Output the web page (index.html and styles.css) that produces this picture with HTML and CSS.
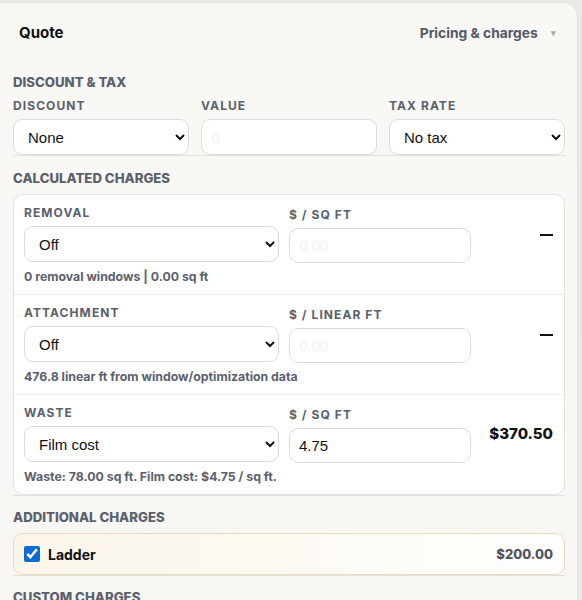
FILE: index.html
```html
<!DOCTYPE html>
<html>
<head>
<meta charset="utf-8">
<link rel="stylesheet" href="styles.css">
</head>
<body>
<div class="card">
  <div class="header">
    <div class="title">Quote</div>
    <div class="tab">Pricing &amp; charges <span class="caret">▾</span></div>
  </div>

  <section class="section sec-first">
    <h3 class="sec-title">Discount &amp; Tax</h3>
    <div class="three">
      <div class="field">
        <label class="lbl">Discount</label>
        <select class="ctl"><option>None</option></select>
      </div>
      <div class="field">
        <label class="lbl">Value</label>
        <input class="ctl" placeholder="0">
      </div>
      <div class="field">
        <label class="lbl">Tax rate</label>
        <select class="ctl"><option>No tax</option></select>
      </div>
    </div>
  </section>

  <section class="section sec-calc">
    <h3 class="sec-title">Calculated charges</h3>
    <div class="calc">
      <div class="row">
        <div class="col1">
          <label class="lbl">Removal</label>
          <select class="ctl"><option>Off</option></select>
          <div class="hint">0 removal windows | 0.00 sq ft</div>
        </div>
        <div class="col2">
          <label class="lbl">$ / sq ft</label>
          <input class="ctl in" placeholder="0.00">
        </div>
        <div class="col3"><span class="dash"></span></div>
      </div>
      <div class="row">
        <div class="col1">
          <label class="lbl">Attachment</label>
          <select class="ctl"><option>Off</option></select>
          <div class="hint">476.8 linear ft from window/optimization data</div>
        </div>
        <div class="col2">
          <label class="lbl">$ / linear ft</label>
          <input class="ctl in" placeholder="0.00">
        </div>
        <div class="col3"><span class="dash"></span></div>
      </div>
      <div class="row">
        <div class="col1">
          <label class="lbl">Waste</label>
          <select class="ctl"><option>Film cost</option></select>
          <div class="hint">Waste: 78.00 sq ft. Film cost: $4.75 / sq ft.</div>
        </div>
        <div class="col2">
          <label class="lbl">$ / sq ft</label>
          <input class="ctl in" value="4.75">
        </div>
        <div class="col3"><span class="amount">$370.50</span></div>
      </div>
    </div>
  </section>

  <section class="section">
    <h3 class="sec-title">Additional charges</h3>
    <div class="extra">
      <label class="chk"><input type="checkbox" checked> <span>Ladder</span></label>
      <span class="extra-amt">$200.00</span>
    </div>
  </section>

  <section class="section">
    <h3 class="sec-title">Custom charges</h3>
  </section>
</div>
</body>
</html>
```

FILE: styles.css
```css
html, body {
  margin: 0;
  padding: 0;
  background: #ebe9e4;
  font-family: Inter, "Liberation Sans", Arial, sans-serif;
  height: 600px;
  overflow: hidden;
}
body {
  padding: 3px 5px 0 0;
}
.card {
  margin-left: -14px;
  background: linear-gradient(180deg, #f9f8f5 0%, #f7f6f2 100%);
  border-radius: 14px;
  padding: 0 12px 40px 27px;
  box-shadow: 0 0 0 1px rgba(0,0,0,0.03);
}
.header {
  display: flex;
  justify-content: space-between;
  align-items: center;
  padding: 17px 0 0 6px;
  height: 26px;
}
.title {
  font-size: 15px;
  font-weight: 700;
  color: #111;
  line-height: 20px;
}
.tab {
  font-size: 13.8px;
  font-weight: 700;
  color: #545b66;
  line-height: 20px;
  padding-right: 9px;
}
.caret {
  font-size: 9px;
  color: #a3a7ad;
  margin-left: 10px;
  vertical-align: 2px;
}
.section {
  border-bottom: 1px solid #e4e1da;
}
.sec-title {
  margin: 0;
  font-size: 13.2px;
  font-weight: 800;
  color: #5a616c;
  text-transform: uppercase;
  line-height: 16px;
  padding: 13px 0 8px;
}
.sec-first .sec-title {
  padding-top: 28px;
  padding-bottom: 8px;
}
.sec-calc .sec-title {
  padding-top: 14px;
}
.three {
  display: grid;
  grid-template-columns: repeat(3, 1fr);
  gap: 12px;
}
.field {
  display: flex;
  flex-direction: column;
}
.lbl {
  display: block;
  font-size: 12px;
  font-weight: 700;
  letter-spacing: 0.09em;
  text-transform: uppercase;
  color: #5a616c;
  line-height: 16px;
  margin-bottom: 5px;
}
.ctl {
  box-sizing: border-box;
  height: 36px;
  width: 100%;
  border: 1px solid #dcdcdc;
  border-radius: 9px;
  background: #fff;
  font-family: "Liberation Sans", Arial, sans-serif;
  font-size: 15px;
  color: #111;
  padding: 0 10px;
  margin: 0;
  outline: none;
}
input.ctl {
  padding: 0 9px;
}
input.ctl::placeholder {
  color: #eef1f5;
}
.calc {
  background: #fff;
  border: 1px solid #e3e3e3;
  border-radius: 10px;
}
.row {
  display: grid;
  grid-template-columns: 255px 182px 1fr;
  column-gap: 10px;
  padding: 10px 11px 0 10px;
  height: 100px;
  box-sizing: border-box;
  border-top: 1px solid #ececec;
}
.row:first-child {
  border-top: none;
  height: 99px;
}
.col1 .lbl { margin-bottom: 5px; }
.col2 {
  padding-top: 2px;
}
.col2 .lbl { margin-bottom: 5px; }
.in {
  height: 35px;
}
.hint {
  margin-top: 8px;
  font-size: 12.3px;
  font-weight: 700;
  color: #5a616c;
  line-height: 14px;
  white-space: nowrap;
}
.col3 {
  display: flex;
  justify-content: flex-end;
  align-items: flex-start;
}
.dash {
  display: block;
  width: 13px;
  height: 2px;
  background: #111;
  margin-top: 29px;
}
.amount {
  font-size: 15px;
  font-weight: 800;
  color: #111;
  margin-top: 20px;
  line-height: 18px;
}
.extra {
  display: flex;
  align-items: center;
  justify-content: space-between;
  height: 42px;
  box-sizing: border-box;
  padding: 0 11px 0 10px;
  border: 1px solid #e8dcbf;
  border-radius: 10px;
  background: linear-gradient(90deg, #fbf5ea 0%, #fdfbf6 60%, #fffefc 100%);
}
.chk {
  display: flex;
  align-items: center;
  gap: 8px;
  font-size: 14px;
  font-weight: 700;
  color: #111;
}
.chk input {
  margin: 0;
  width: 16px;
  height: 16px;
  accent-color: #0b6bd3;
}
.extra-amt {
  font-size: 13px;
  font-weight: 800;
  color: #4e5561;
}
```
